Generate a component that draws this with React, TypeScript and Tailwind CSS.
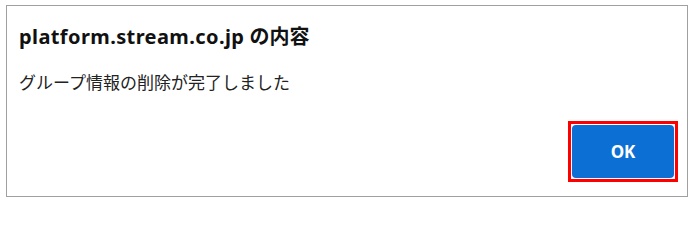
export default function App() {
  return (
    <div className="w-[692px] h-[201px] bg-white pt-[5px] pl-[6px]" style={{ fontFamily: '"Noto Sans", "Noto Sans CJK JP", sans-serif' }}>
      <div className="w-[682px] h-[192px] border border-[#a0a0a0] flex flex-col pl-[12px] pr-[9px] pt-[18px] pb-[14px]">
        <div className="text-[20px] leading-[26px] font-bold text-[#111]">
          <span className="tracking-[0.4px]">platform.stream.co.jp</span> の内容
        </div>
        <div className="mt-[21px] text-[17px] leading-[22px] text-[#222]" style={{ fontFamily: '"Noto Sans CJK JP", sans-serif' }}>グループ情報の削除が完了しました</div>
        <div className="mt-auto flex justify-end">
          <div className="border-[3px] border-[#ff0000] p-px">
            <button className="w-[102px] h-[53px] rounded-[4px] bg-[#0b6fd3] text-white text-[17px] font-bold flex items-center justify-center">
              OK
            </button>
          </div>
        </div>
      </div>
    </div>
  );
}
